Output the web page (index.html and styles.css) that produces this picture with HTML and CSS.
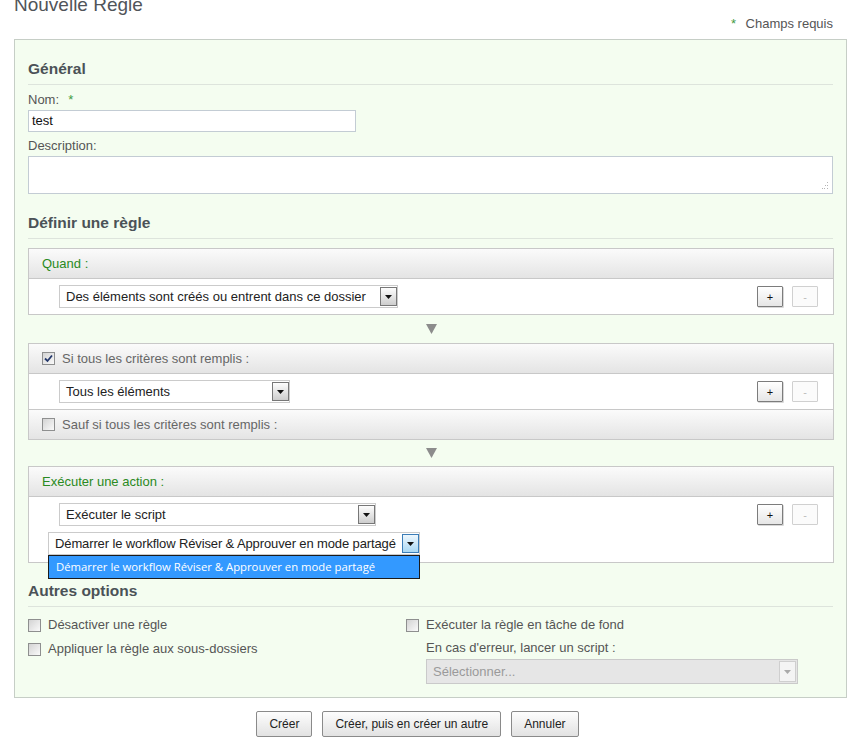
FILE: index.html
```html
<!DOCTYPE html>
<html lang="fr">
<head>
<meta charset="utf-8">
<title>Nouvelle Règle</title>
<link rel="stylesheet" href="styles.css">
</head>
<body>
<div class="page">
  <h1 class="title">Nouvelle Règle</h1>
  <div class="required"><span class="star">*</span> Champs requis</div>

  <div class="form-box">
    <h2 class="section">Général</h2>
    <div class="field-label">Nom: &nbsp;<span class="star">*</span></div>
    <div class="text-input">test</div>
    <div class="field-label second">Description:</div>
    <div class="textarea">
      <svg class="grip" width="8" height="8" viewBox="0 0 8 8"><g fill="#b5b5b5"><rect x="6" y="0" width="1" height="1"/><rect x="4" y="3" width="1" height="1"/><rect x="6" y="3" width="1" height="1"/><rect x="1" y="6" width="1" height="1"/><rect x="3" y="6" width="1" height="1"/><rect x="6" y="6" width="1" height="1"/></g></svg>
    </div>

    <h2 class="section gap">Définir une règle</h2>

    <div class="panel first">
      <div class="panel-head green">Quand :</div>
      <div class="panel-body">
        <div class="row">
          <div class="select w-quand"><span class="select-text">Des éléments sont créés ou entrent dans ce dossier</span><span class="select-arrow"><svg width="7" height="4" viewBox="0 0 7 4"><polygon points="0,0 7,0 3.5,4" fill="#111"/></svg></span></div>
          <div class="mini-group"><span class="mini">+</span><span class="mini disabled">-</span></div>
        </div>
      </div>
    </div>

    <div class="flow-arrow"><svg width="11" height="10" viewBox="0 0 11 10"><polygon points="0,0 11,0 5.5,10" fill="#8c8c8c"/></svg></div>

    <div class="panel">
      <div class="panel-head"><span class="checkbox checked"><svg width="9" height="9" viewBox="0 0 9 9"><path d="M1 4.5 L3.5 7 L8 1.5" fill="none" stroke="#24386b" stroke-width="1.8"/></svg></span>Si tous les critères sont remplis :</div>
      <div class="panel-body">
        <div class="row">
          <div class="select w-tous"><span class="select-text">Tous les éléments</span><span class="select-arrow"><svg width="7" height="4" viewBox="0 0 7 4"><polygon points="0,0 7,0 3.5,4" fill="#111"/></svg></span></div>
          <div class="mini-group"><span class="mini">+</span><span class="mini disabled">-</span></div>
        </div>
      </div>
      <div class="panel-head sub"><span class="checkbox"></span>Sauf si tous les critères sont remplis :</div>
    </div>

    <div class="flow-arrow short"><svg width="11" height="10" viewBox="0 0 11 10"><polygon points="0,0 11,0 5.5,10" fill="#8c8c8c"/></svg></div>

    <div class="panel">
      <div class="panel-head green">Exécuter une action :</div>
      <div class="panel-body action">
        <div class="row">
          <div class="select w-script"><span class="select-text">Exécuter le script</span><span class="select-arrow"><svg width="7" height="4" viewBox="0 0 7 4"><polygon points="0,0 7,0 3.5,4" fill="#111"/></svg></span></div>
          <div class="mini-group"><span class="mini">+</span><span class="mini disabled">-</span></div>
        </div>
        <div class="sub-select">
          <div class="select focused w-workflow"><span class="select-text tight">Démarrer le workflow Réviser &amp; Approuver en mode partagé</span><span class="select-arrow"><svg width="7" height="4" viewBox="0 0 7 4"><polygon points="0,0 7,0 3.5,4" fill="#111"/></svg></span></div>
          <div class="dropdown-list">Démarrer le workflow Réviser &amp; Approuver en mode partagé</div>
        </div>
      </div>
    </div>

    <h2 class="section options">Autres options</h2>
    <div class="options-grid">
      <div class="col">
        <div class="check-row"><span class="checkbox"></span>Désactiver une règle</div>
        <div class="check-row"><span class="checkbox"></span>Appliquer la règle aux sous-dossiers</div>
      </div>
      <div class="col">
        <div class="check-row"><span class="checkbox"></span>Exécuter la règle en tâche de fond</div>
        <div class="error-label">En cas d'erreur, lancer un script :</div>
        <div class="select disabled-select"><span class="select-text">Sélectionner...</span><span class="select-arrow"><svg width="7" height="4" viewBox="0 0 7 4"><polygon points="0,0 7,0 3.5,4" fill="#aaa"/></svg></span></div>
      </div>
    </div>
  </div>

  <div class="actions">
    <button class="btn" type="button">Créer</button>
    <button class="btn" type="button">Créer, puis en créer un autre</button>
    <button class="btn" type="button">Annuler</button>
  </div>
</div>
</body>
</html>
```

FILE: styles.css
```css
* { box-sizing: border-box; }

html, body {
  margin: 0;
  padding: 0;
  background: #fff;
}

body {
  font-family: "Liberation Sans", Arial, sans-serif;
  font-size: 13px;
  color: #555;
  overflow: hidden;
}

.page {
  padding: 0 16px 0 14px;
}

.title {
  margin: -6px 0 0 0;
  font-size: 19px;
  line-height: 22px;
  font-weight: normal;
  color: #505459;
}

.required {
  text-align: right;
  line-height: 16px;
  padding-right: 14px;
  margin-bottom: 7px;
  color: #555;
}

.star {
  color: #3f9a3f;
  margin-right: 6px;
}

.field-label .star { margin-left: 2px; }

.form-box {
  border: 1px solid #c6cec6;
  background: #f4fdf0;
  padding: 20px 13px 13px 13px;
}

.section {
  margin: 0;
  font-size: 15.5px;
  line-height: 18px;
  font-weight: bold;
  color: #4b5257;
  padding-bottom: 6px;
  border-bottom: 1px solid #dde4dc;
}

.section.gap { margin-top: 20px; }
.section.options { margin-top: 19px; }

.field-label {
  margin-top: 8px;
  line-height: 14px;
  color: #555;
}

.field-label.second { margin-top: 7px; }

.text-input {
  margin-top: 3px;
  width: 328px;
  height: 22px;
  border: 1px solid #c3ccd4;
  background: #fff;
  color: #111;
  padding-left: 3px;
  line-height: 20px;
}

.textarea {
  position: relative;
  margin-top: 3px;
  height: 38px;
  width: 805px;
  border: 1px solid #c3ccd4;
  background: #fff;
}

.grip {
  position: absolute;
  right: 3px;
  bottom: 3px;
}

.panel {
  border: 1px solid #c8c8c8;
  background: #fff;
  width: 806px;
}

.panel.first { margin-top: 9px; }

.panel-head {
  height: 30px;
  border-bottom: 1px solid #c8c8c8;
  background: linear-gradient(#fbfbfb, #e4e4e4);
  display: flex;
  align-items: center;
  padding-left: 13px;
  color: #666;
}

.panel-head.sub {
  border-bottom: none;
  border-top: 1px solid #c8c8c8;
  height: 30px;
}

.panel-head.green { color: #2a8a22; }

.panel-body {
  padding: 6px 15px 6px 30px;
}

.panel-body.action {
  padding-bottom: 7px;
}

.row {
  display: flex;
  align-items: center;
  justify-content: space-between;
}

.mini-group {
  display: flex;
  gap: 9px;
}

.mini {
  width: 26px;
  height: 21px;
  border: 1px solid #7c7c7c;
  background: linear-gradient(#ffffff, #e6e6e6);
  border-radius: 1px;
  display: flex;
  align-items: center;
  justify-content: center;
  font-size: 11px;
  color: #111;
  box-shadow: 1px 1px 0 #d8d8d8;
}

.mini.disabled {
  border-color: #d0d0d0;
  background: #fbfbfb;
  color: #bbb;
  box-shadow: none;
}

.select {
  display: flex;
  height: 23px;
  border: 1px solid #cbcbcb;
  background: #fff;
  padding: 1px 0 1px 0;
}

.select-text {
  flex: 1;
  padding-left: 6px;
  line-height: 19px;
  color: #222;
  white-space: nowrap;
  overflow: hidden;
}

.select-text.tight {
  padding-left: 6px;
  letter-spacing: -0.12px;
}

.select-arrow {
  width: 17px;
  border: 1px solid #777;
  background: linear-gradient(#fdfdfd, #cdcdcd);
  display: flex;
  align-items: center;
  justify-content: center;
}

.w-quand { width: 339px; }
.w-tous { width: 231px; }
.w-script { width: 317px; }
.w-workflow { width: 372px; }

.select.focused .select-arrow {
  border-color: #3b7db8;
  background: linear-gradient(#eef7fd, #a9d8f4);
}

.sub-select {
  position: relative;
  margin-top: 6px;
  margin-left: -11px;
}

.dropdown-list {
  position: absolute;
  left: 0;
  top: 23px;
  width: 372px;
  height: 24px;
  border: 1px solid #1b1b1b;
  background: #3399ff;
  color: #fff;
  font-family: "Open Sans", "Noto Sans", sans-serif;
  font-size: 11.3px;
  line-height: 21px;
  padding-left: 7px;
  white-space: nowrap;
  z-index: 2;
}

.flow-arrow {
  height: 28px;
  display: flex;
  align-items: center;
  justify-content: center;
  width: 806px;
}

.flow-arrow.short { height: 26px; }

.checkbox {
  width: 13px;
  height: 13px;
  border: 1px solid #8e8f8f;
  background: linear-gradient(135deg, #d3d3d3, #fafafa);
  display: inline-flex;
  align-items: center;
  justify-content: center;
  margin-right: 7px;
  flex: none;
}

.options-grid {
  display: grid;
  grid-template-columns: 378px 1fr;
  margin-top: 10px;
}

.check-row {
  display: flex;
  align-items: center;
  line-height: 16px;
  color: #555;
  margin-bottom: 8px;
}

.error-label {
  padding-left: 20px;
  line-height: 16px;
  margin-top: -1px;
}

.disabled-select {
  margin-left: 20px;
  margin-top: 3px;
  width: 372px;
  height: 25px;
  background: #e6e6e6;
  border-color: #cacaca;
}

.disabled-select .select-text {
  color: #9a9a9a;
  line-height: 21px;
}

.disabled-select .select-arrow {
  border-color: #cfcfcf;
  background: #f4f4f4;
  margin-right: 1px;
}

.actions {
  display: flex;
  justify-content: center;
  gap: 10px;
  margin-top: 13px;
  padding-right: 26px;
}

.btn {
  height: 26px;
  padding: 0 12px;
  border: 1px solid #8a8a8a;
  border-radius: 2px;
  background: linear-gradient(#fdfdfd, #e2e2e2);
  font-family: "Liberation Sans", Arial, sans-serif;
  font-size: 12px;
  color: #222;
}
```
